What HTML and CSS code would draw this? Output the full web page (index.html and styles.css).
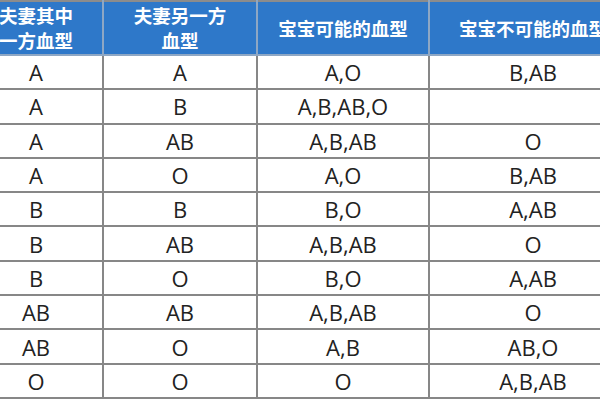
FILE: index.html
```html
<!DOCTYPE html>
<html lang="zh">
<head>
<meta charset="utf-8">
<link rel="stylesheet" href="styles.css">
</head>
<body>
<table class="blood">
  <colgroup>
    <col class="c1"><col class="c2"><col class="c3"><col class="c4">
  </colgroup>
  <thead>
    <tr>
      <th>夫妻其中<br>一方血型</th>
      <th>夫妻另一方<br>血型</th>
      <th>宝宝可能的血型</th>
      <th>宝宝不可能的血型</th>
    </tr>
  </thead>
  <tbody>
    <tr><td>A</td><td>A</td><td>A,O</td><td>B,AB</td></tr>
    <tr><td>A</td><td>B</td><td>A,B,AB,O</td><td></td></tr>
    <tr><td>A</td><td>AB</td><td>A,B,AB</td><td>O</td></tr>
    <tr><td>A</td><td>O</td><td>A,O</td><td>B,AB</td></tr>
    <tr><td>B</td><td>B</td><td>B,O</td><td>A,AB</td></tr>
    <tr><td>B</td><td>AB</td><td>A,B,AB</td><td>O</td></tr>
    <tr><td>B</td><td>O</td><td>B,O</td><td>A,AB</td></tr>
    <tr><td>AB</td><td>AB</td><td>A,B,AB</td><td>O</td></tr>
    <tr><td>AB</td><td>O</td><td>A,B</td><td>AB,O</td></tr>
    <tr><td>O</td><td>O</td><td>O</td><td>A,B,AB</td></tr>
  </tbody>
</table>
</body>
</html>
```

FILE: styles.css
```css
html, body {
  margin: 0;
  padding: 0;
  background: #ffffff;
  overflow: hidden;
}

.blood {
  margin-left: -32px;
  border-collapse: collapse;
  table-layout: fixed;
  width: 668px;
  font-family: "Open Sans", "Noto Sans CJK SC", sans-serif;
}

.c1 { width: 134px; }
.c2 { width: 154px; }
.c3 { width: 172px; }
.c4 { width: 208px; }

.blood th {
  background: #2e78c9;
  color: #ffffff;
  font-family: "Noto Sans CJK SC", "Noto Sans", sans-serif;
  font-weight: 700;
  font-size: 18.5px;
  line-height: 25px;
  height: 52px;
  padding: 0;
  text-align: center;
  vertical-align: middle;
  border: 2px solid #8ea7c4;
  border-top-color: #8c8c8c;
}

.blood td {
  height: 32.3px;
  padding: 0;
  text-align: center;
  vertical-align: middle;
  font-size: 22px;
  line-height: 24px;
  color: #222222;
  border: 2px solid #878787;
}
```
